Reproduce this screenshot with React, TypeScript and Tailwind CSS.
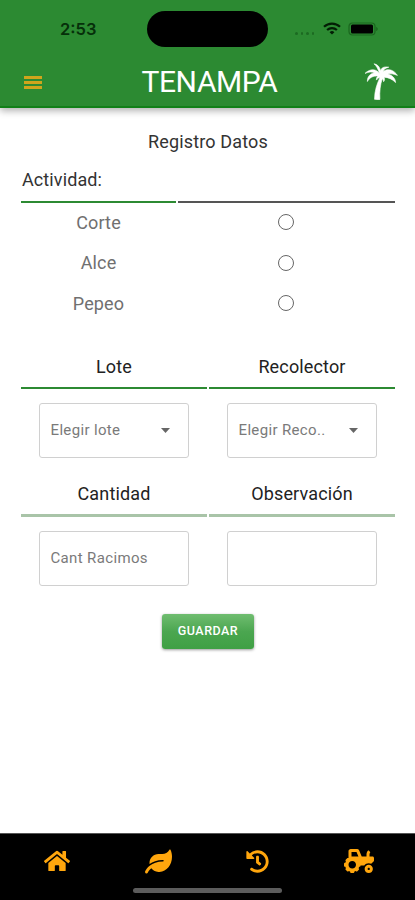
import React from 'react';
import { FaHistory, FaHome, FaLeaf, FaTractor } from 'react-icons/fa';

const activities = ['Corte', 'Alce', 'Pepeo'];

const StatusBar: React.FC = () => (
  <div className="flex h-[58px] pt-[11px]">
    <div className="w-[147px] pl-[60px] pt-[7px] font-[Inter,sans-serif] text-[16.5px] leading-[22px] font-semibold text-[#06300a]">
      2:53
    </div>
    <div className="h-[36px] w-[121px] rounded-full bg-black" />
    <div className="flex h-[36px] items-center pl-[27px]">
      <div className="mt-[9px] flex gap-[3px]">
        <span className="size-[2.5px] rounded-full bg-[#1c6a22]" />
        <span className="size-[2.5px] rounded-full bg-[#1c6a22]" />
        <span className="size-[2.5px] rounded-full bg-[#1c6a22]" />
        <span className="size-[2.5px] rounded-full bg-[#1c6a22]" />
      </div>
      <svg className="-mt-[2px] ml-[9px] h-[13px] w-[18px]" viewBox="0 0 18 13" fill="none" stroke="#031d05" strokeWidth="2.2">
        <path d="M1 4.8a11.6 11.6 0 0 1 16 0" />
        <path d="M4.1 8a7.2 7.2 0 0 1 9.8 0" />
        <path d="M9 12.6 6.6 10.2a3.5 3.5 0 0 1 4.8 0z" fill="#031d05" stroke="none" />
      </svg>
      <svg className="-mt-[1px] ml-[7px] h-[14px] w-[30px]" viewBox="0 0 30 14">
        <rect x="1" y="1" width="26" height="12" rx="3.5" fill="none" stroke="#1b671f" strokeWidth="1.2" />
        <rect x="3" y="2.500" width="22" height="9" rx="1.5" fill="#000" />
        <path d="M28.2 5v4c1-.4 1.5-1.100 1.500-2s-.5-1.600-1.500-2z" fill="#1b671f" />
      </svg>
    </div>
  </div>
);

const PalmTree: React.FC = () => (
  <svg
    className="-mt-[2px] h-[37px] w-[34px]"
    viewBox="0 0 34 37"
    fill="#fff"
    stroke="#fff"
    strokeWidth="0.6"
    strokeLinejoin="round"
  >
    <path d="M15.500 10.500C12 5.500 6 5.500 1 10.400c4-1.600 7-1.700 9.500-.7C6 10.700 3.200 13.700 3.400 18.500c2-3.800 5.600-5.800 10.600-5.400-1.200 1-1.800 2.300-1.600 4 1-1.600 2.300-2.400 3.600-2.600-3.200 6.500-5.400 13.500-5.500 21.800 1.600.6 3.600.6 5.400.1-.5-8 .4-15.100 2.400-20.700.8.8 1.200 1.700 1.300 3 1.200-1.500 1.200-3 .4-4.500 4.200.2 8.200 1.700 11.600 5.400-.2-4.400-3.400-7.400-7.800-8.500 3-.6 6-.2 9.600 1.300C29.800 6.700 24 5 19 8.400c.8-2.200 2.600-3.400 5.800-4.200-5-.9-7.600.6-8.200 3.600C15.800 4.200 13.600 1.200 10 .8c2.500 2.200 4.200 5.400 5.500 9.700z" />
  </svg>
);

const Header: React.FC = () => (
  <header className="h-[108px] border-b-2 border-[#118018] bg-[#2c8a32] shadow-[0_3px_7px_rgba(0,0,0,0.3)]">
    <StatusBar />
    <div className="flex h-[48px] items-center justify-between pl-[24px] pr-[17px]">
      <button className="flex w-[34px] flex-col gap-[2px]">
        <span className="h-[3px] w-[18px] bg-[#cfa51c]" />
        <span className="h-[3px] w-[18px] bg-[#cfa51c]" />
        <span className="h-[3px] w-[18px] bg-[#cfa51c]" />
      </button>
      <h1 className="pr-[3px] text-[30px] leading-[36px] tracking-[-0.4px] text-white">TENAMPA</h1>
      <PalmTree />
    </div>
  </header>
);

interface FieldProps {
  title: string;
  placeholder?: string;
  select?: boolean;
  lineClass: string;
}

const Field: React.FC<FieldProps> = ({ title, placeholder, select, lineClass }) => (
  <div className="flex-1">
    <h3 className="text-center text-[18px] leading-[24px] tracking-[0.15px] text-[#222]">{title}</h3>
    <div className={lineClass} />
    <div className="mx-[18px] flex h-[55px] items-center justify-between rounded-[3px] border border-[#d0d0d0] pl-[10.500px] pr-[18px] text-[15px] tracking-[0.35px] text-[#7a7a7a]">
      <span>{placeholder}</span>
      {select && (
        <svg className="h-[5px] w-[9px]" viewBox="0 0 9 5">
          <path d="M0 0h9L4.500 5z" fill="#666" />
        </svg>
      )}
    </div>
  </div>
);

const BottomNav: React.FC = () => (
  <nav className="h-[67px] border-t border-[#555] bg-black">
    <div className="flex h-[54px] items-center justify-around pl-[7px] pr-[4px] text-[#ffa60d]">
      <FaHome size={26} />
      <FaLeaf size={27} />
      <FaHistory size={23} />
      <FaTractor size={30} />
    </div>
    <div className="mx-auto h-[5px] w-[149px] rounded-full bg-[#5c5c5c]" />
  </nav>
);

export default function App() {
  return (
    <div className="flex h-[900px] w-[415px] flex-col overflow-hidden bg-white font-[Roboto,sans-serif]">
      <Header />
      <main className="flex-1 pl-[21px] pr-[20px] pt-[22px]">
        <h2 className="text-center text-[18px] leading-[24px] tracking-[0.15px] text-[#333]">Registro Datos</h2>
        <div className="mt-[14px] pl-px text-[18px] leading-[24px] tracking-[0.1px] text-[#333]">Actividad:</div>
        <div className="mt-[9px] flex gap-[2px]">
          <div className="h-[2px] w-[155px] bg-[#2c8a32]" />
          <div className="h-[2px] flex-1 bg-[#555]" />
        </div>
        <div className="-mt-px">
          {activities.map((name) => (
            <div key={name} className="flex h-[40.5px] items-center">
              <div className="w-[155px] text-center text-[18px] tracking-[0.15px] text-[#707070]">{name}</div>
              <div className="flex flex-1 justify-center">
                <span className="size-[16px] rounded-full border-[1.5px] border-[#666]" />
              </div>
            </div>
          ))}
        </div>
        <div className="mt-[31px] flex gap-[2px]">
          <Field title="Lote" placeholder="Elegir lote" select lineClass="mt-[8px] mb-[14px] h-[2px] bg-[#2c8a32]" />
          <Field title="Recolector" placeholder="Elegir Reco.." select lineClass="mt-[8px] mb-[14px] h-[2px] bg-[#2c8a32]" />
        </div>
        <div className="mt-[24px] flex gap-[2px]">
          <Field title="Cantidad" placeholder="Cant Racimos" lineClass="mt-[8px] mb-[14px] h-[3px] bg-[#a9c4a8]" />
          <Field title="Observación" lineClass="mt-[8px] mb-[14px] h-[3px] bg-[#a9c4a8]" />
        </div>
        <button className="mx-auto mt-[28px] block h-[35px] w-[92px] rounded-[3px] bg-linear-to-b from-[#6fbd70] via-[#4ba650] to-[#3fa044] text-[12.5px] font-medium tracking-[0.5px] text-white shadow-[0_1px_3px_rgba(0,0,0,0.4)]">
          GUARDAR
        </button>
      </main>
      <BottomNav />
    </div>
  );
}
